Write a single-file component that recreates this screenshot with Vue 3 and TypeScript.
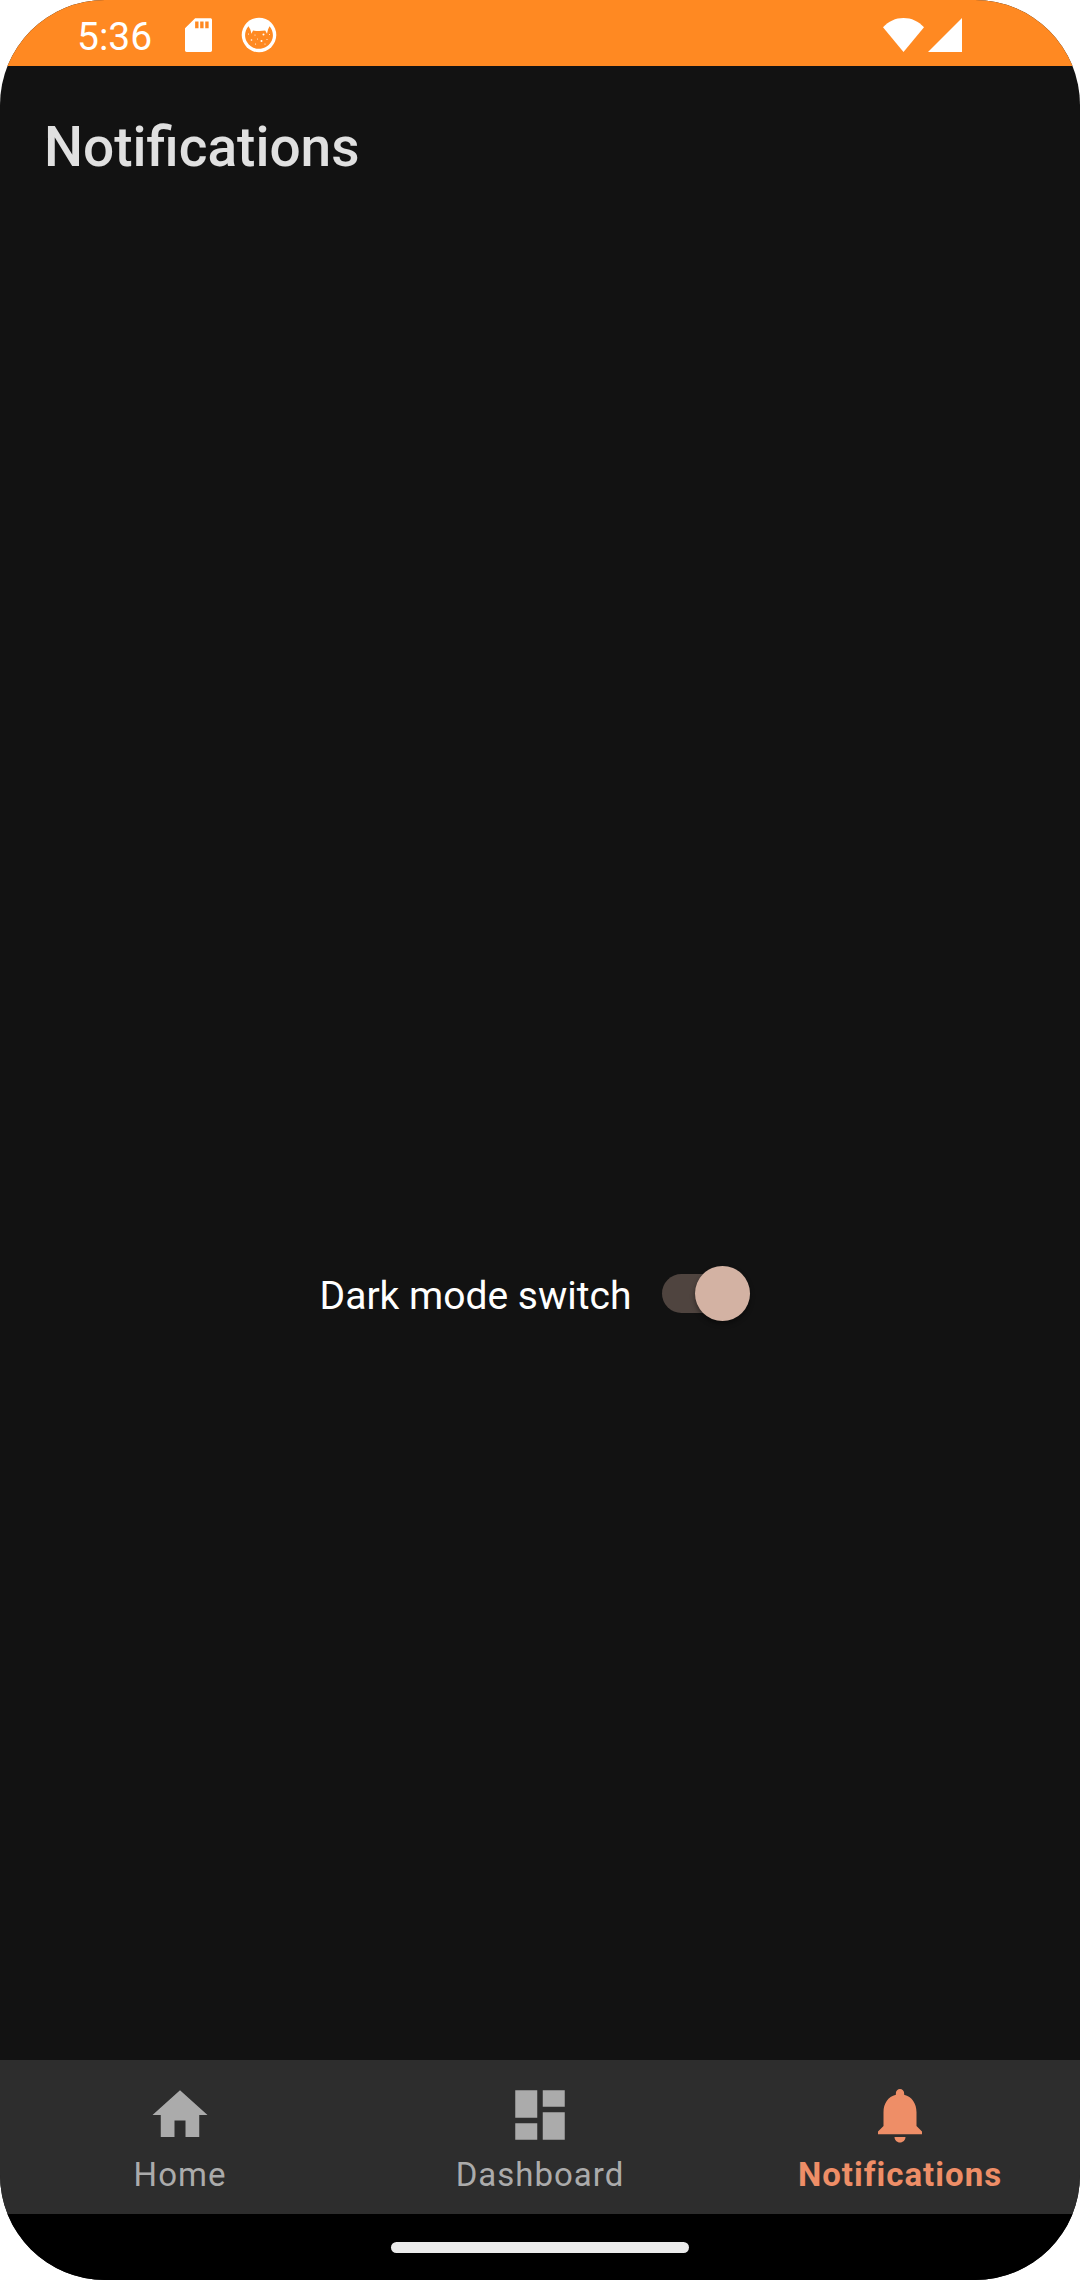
<script setup lang="ts">
import { ref } from 'vue'

interface NavItem {
  id: string
  label: string
  path: string
}

const navItems: NavItem[] = [
  { id: 'home', label: 'Home', path: 'M10 20v-6h4v6h5v-8h3L12 3 2 12h3v8z' },
  {
    id: 'dashboard',
    label: 'Dashboard',
    path: 'M3 13h8V3H3v10zm0 8h8v-6H3v6zm10 0h8V11h-8v10zm0-18v6h8V3h-8z',
  },
  {
    id: 'notifications',
    label: 'Notifications',
    path: 'M12 22c1.1 0 2-.9 2-2h-4c0 1.1.89 2 2 2zm6-6v-5c0-3.07-1.64-5.64-4.5-6.32V4c0-.83-.67-1.5-1.5-1.5s-1.5.67-1.5 1.5v.68C7.63 5.36 6 7.92 6 11v5l-2 2v1h16v-1l-2-2z',
  },
]

const current = ref('notifications')
const darkMode = ref(true)
</script>

<template>
  <div class="screen">
    <div class="status-bar">
      <span class="time">5:36</span>
      <div class="status-left">
        <svg class="sd" viewBox="4 2 16 20" aria-hidden="true">
          <path
            d="M18 2h-8L4 8v13c0 .6.4 1 1 1h14c.6 0 1-.4 1-1V3c0-.6-.4-1-1-1zm-6 6h-2V4h2v4zm3 0h-2V4h2v4zm3 0h-2V4h2v4z"
          />
        </svg>
        <svg class="cat" viewBox="0 0 36 36" aria-hidden="true">
          <circle cx="18" cy="18" r="17.3" />
          <path
            class="cutout"
            d="M7.500 9.200L9.300 12.500 10.500 16.800 12 13.600C16 14.200 20.500 14.200 24.200 13.600L26 16.800 27 12.500 28.500 9.200C32.500 14 33 20 30 25 27.300 29.400 23 31.800 18 31.800S8.700 29.400 6 25C3 20 3.500 14 7.500 9.200z"
          />
          <circle cx="14" cy="18" r=".6" />
          <circle cx="22.500" cy="17.500" r="1" />
          <circle cx="20.500" cy="24" r="1" />
          <circle cx="10.500" cy="23" r=".8" />
          <circle cx="14.500" cy="27" r=".6" />
          <circle cx="26" cy="22.500" r=".6" />
          <circle cx="16.500" cy="22" r=".5" />
          <circle cx="7.500" cy="17" r=".6" />
          <circle cx="24" cy="27" r=".6" />
          <circle cx="28.500" cy="17.500" r=".5" />
        </svg>
      </div>
      <div class="status-right">
        <svg class="wifi" viewBox="0 0 41 34" aria-hidden="true">
          <path d="M20.500 34L0 9.300C5.500 3.300 12.500 0 20.500 0S35.500 3.300 41 9.300z" />
        </svg>
        <svg class="signal" viewBox="0 0 34 34" aria-hidden="true">
          <path d="M0 34h34V0z" />
        </svg>
      </div>
    </div>

    <header class="app-bar">
      <h1>Notifications</h1>
    </header>

    <main>
      <label class="setting">
        <span>Dark mode switch</span>
        <input v-model="darkMode" type="checkbox" role="switch" />
      </label>
    </main>

    <nav>
      <button
        v-for="item in navItems"
        :key="item.id"
        type="button"
        :class="{ active: current === item.id }"
        :aria-current="current === item.id ? 'page' : undefined"
        @click="current = item.id"
      >
        <svg viewBox="0 0 24 24" aria-hidden="true"><path :d="item.path" /></svg>
        <span>{{ item.label }}</span>
      </button>
    </nav>

    <div class="gesture-bar"><div class="handle"></div></div>
  </div>
</template>

<style>
body {
  background: #fff;
}
</style>

<style scoped>
.screen {
  display: flex;
  flex-direction: column;
  min-height: 100vh;
  overflow: hidden;
  border-radius: 105px;
  background: #121212;
  color: #fff;
  font-family: Roboto, 'Liberation Sans', sans-serif;
}

.status-bar {
  display: flex;
  align-items: center;
  height: 66px;
  padding: 0 118px 0 77px;
  background: #ff8922;
}

.status-bar svg {
  display: block;
  height: 34px;
  fill: #fff;
}

.time {
  padding-top: 8px;
  font-size: 39px;
  line-height: 46px;
}

.status-left,
.status-right {
  display: flex;
  align-items: center;
  padding-top: 4px;
}

.status-left {
  gap: 29px;
  margin-left: 33px;
}

.status-right {
  gap: 4px;
  margin-left: auto;
}

.sd {
  width: 27px;
}

.status-bar .cat {
  width: 36px;
  height: 36px;
}

.status-bar .cutout {
  fill: #ff8922;
}

.wifi {
  width: 41px;
}

.signal {
  width: 34px;
}

.app-bar {
  display: flex;
  align-items: center;
  height: 154px;
  padding: 0 44px;
}

h1 {
  margin: 0;
  padding-top: 8px;
  color: #e0e0e0;
  font-size: 55px;
  font-weight: 500;
  line-height: 64px;
}

main {
  display: flex;
  flex: 1;
  align-items: center;
  justify-content: center;
  padding-top: 307px;
}

.setting {
  display: flex;
  align-items: center;
  gap: 31px;
  padding-right: 10px;
  font-size: 39px;
  line-height: 46px;
}

.setting span {
  padding-top: 4px;
}

.setting input {
  position: relative;
  display: flex;
  align-items: center;
  appearance: none;
  width: 88px;
  height: 55px;
  margin: 0;
}

.setting input::before {
  content: '';
  flex: 1;
  height: 39px;
  border-radius: 20px;
  background: #757575;
}

.setting input::after {
  content: '';
  position: absolute;
  left: 0;
  width: 55px;
  height: 55px;
  border-radius: 50%;
  background: #bdbdbd;
  box-shadow: 0 3px 5px rgba(0, 0, 0, 0.4);
}

.setting input:checked::before {
  background: #4f443f;
}

.setting input:checked::after {
  right: 0;
  left: auto;
  background: #d3b2a3;
}

nav {
  display: flex;
  height: 154px;
  background: #2d2d2d;
}

nav button {
  display: flex;
  flex: 1;
  flex-direction: column;
  align-items: center;
  gap: 7px;
  padding: 22px 0 0;
  border: 0;
  background: none;
  color: #ababab;
  font: 400 33px/39px Roboto, 'Liberation Sans', sans-serif;
  letter-spacing: 1px;
}

nav button.active {
  color: #ee8e67;
  font-weight: 700;
}

nav svg {
  width: 66px;
  height: 66px;
  fill: currentColor;
}

.gesture-bar {
  display: flex;
  align-items: center;
  justify-content: center;
  height: 66px;
  background: #000;
}

.handle {
  width: 298px;
  height: 11px;
  border-radius: 6px;
  background: #ebebeb;
}
</style>
